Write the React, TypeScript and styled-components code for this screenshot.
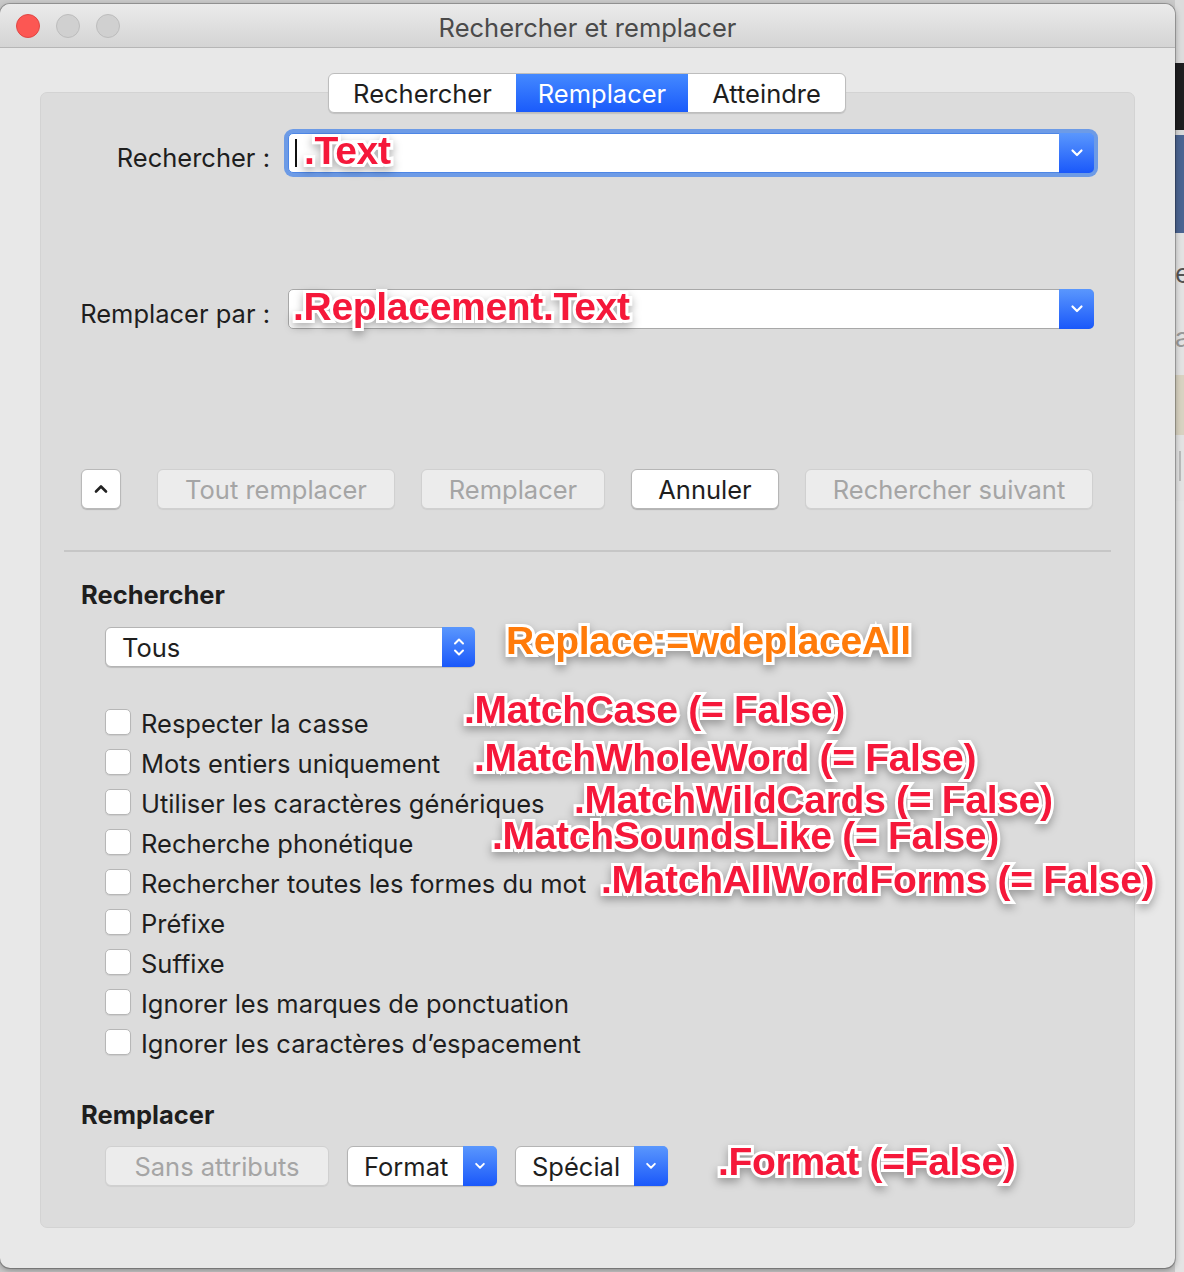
import React from 'react';
import styled, { createGlobalStyle, css } from 'styled-components';

const GlobalStyle = createGlobalStyle`
  html, body {
    margin: 0;
    padding: 0;
    background: #d6d6d6;
  }
  body {
    font-family: Inter, "Noto Sans", "Liberation Sans", sans-serif;
    color: #1e1e1e;
  }
  * { box-sizing: border-box; }
`;

const SEARCH_OPTIONS = [
  'Respecter la casse',
  'Mots entiers uniquement',
  'Utiliser les caractères génériques',
  'Recherche phonétique',
  'Rechercher toutes les formes du mot',
  'Préfixe',
  'Suffixe',
  'Ignorer les marques de ponctuation',
  'Ignorer les caractères d’espacement',
];

// annotation callouts, positions relative to the group box
const NOTES: Array<{ text: string; x: number; y: number; tone?: 'orange' }> = [
  { text: '.Text', x: 263, y: 38 },
  { text: '.Replacement.Text', x: 252, y: 194 },
  { text: 'Replace:=wdeplaceAll', x: 465, y: 528, tone: 'orange' },
  { text: '.MatchCase (= False)', x: 423, y: 597 },
  { text: '.MatchWholeWord (= False)', x: 433, y: 645 },
  { text: '.MatchWildCards (= False)', x: 533, y: 687 },
  { text: '.MatchSoundsLike (= False)', x: 451, y: 723 },
  { text: '.MatchAllWordForms (= False)', x: 560, y: 767 },
  { text: '.Format (=False)', x: 677, y: 1049 },
];

const ChevronDown = ({ size = 14 }: { size?: number }) => (
  <svg width={size} height={size} viewBox="0 0 14 14" fill="none">
    <path d="M2.5 4.5 L7 9 L11.5 4.5" stroke="#fff" strokeWidth="2.2" strokeLinecap="round" strokeLinejoin="round" />
  </svg>
);

const Stepper = () => (
  <svg width="14" height="26" viewBox="0 0 14 26" fill="none">
    <path d="M3 9.5 L7 5.5 L11 9.5" stroke="#fff" strokeWidth="2" strokeLinecap="round" strokeLinejoin="round" />
    <path d="M3 16.5 L7 20.5 L11 16.5" stroke="#fff" strokeWidth="2" strokeLinecap="round" strokeLinejoin="round" />
  </svg>
);

const CaretUp = () => (
  <svg width="16" height="16" viewBox="0 0 16 16" fill="none">
    <path d="M3 10.5 L8 5.5 L13 10.5" stroke="#222" strokeWidth="2.6" strokeLinecap="round" strokeLinejoin="round" />
  </svg>
);

const App: React.FC = () => {
  return (
    <>
      <GlobalStyle />
      <Desktop>
        <WindowColumn>
          <Window>
            <TitleBar>
              <Lights>
                <Light $color="close" />
                <Light />
                <Light />
              </Lights>
              <Title>Rechercher et remplacer</Title>
              <span />
            </TitleBar>

            <Body>
              <Tabs>
                <Tab>Rechercher</Tab>
                <Tab $active>Remplacer</Tab>
                <Tab>Atteindre</Tab>
              </Tabs>

              <GroupBox>
                <FieldGrid>
                  <FieldLabel>Rechercher :</FieldLabel>
                  <Combo $focused>
                    <ComboInput>
                      <Cursor />
                    </ComboInput>
                    <BlueArrow $width={35}>
                      <ChevronDown />
                    </BlueArrow>
                  </Combo>
                  <FieldLabel>Remplacer par :</FieldLabel>
                  <Combo>
                    <ComboInput />
                    <BlueArrow $width={35}>
                      <ChevronDown />
                    </BlueArrow>
                  </Combo>
                </FieldGrid>

                <ActionRow>
                  <SquareButton>
                    <CaretUp />
                  </SquareButton>
                  <PushButton $width={238} $disabled>Tout remplacer</PushButton>
                  <PushButton $width={184} $disabled>Remplacer</PushButton>
                  <PushButton $width={148}>Annuler</PushButton>
                  <PushButton $width={288} $disabled>Rechercher suivant</PushButton>
                </ActionRow>

                <Separator />

                <SectionTitle>Rechercher</SectionTitle>
                <Indented>
                  <PopUp $width={370}>
                    <PopUpText>Tous</PopUpText>
                    <BlueArrow $width={33}>
                      <Stepper />
                    </BlueArrow>
                  </PopUp>
                </Indented>

                <CheckList>
                  {SEARCH_OPTIONS.map((label) => (
                    <CheckRow key={label}>
                      <CheckBox />
                      <CheckLabel>{label}</CheckLabel>
                    </CheckRow>
                  ))}
                </CheckList>

                <SectionTitle $gap={38}>Remplacer</SectionTitle>
                <BottomRow>
                  <PushButton $width={224} $disabled>Sans attributs</PushButton>
                  <PopUp $width={150}>
                    <PopUpText>Format</PopUpText>
                    <BlueArrow $width={34}>
                      <ChevronDown size={12} />
                    </BlueArrow>
                  </PopUp>
                  <PopUp $width={153}>
                    <PopUpText>Spécial</PopUpText>
                    <BlueArrow $width={34}>
                      <ChevronDown size={12} />
                    </BlueArrow>
                  </PopUp>
                </BottomRow>

                {NOTES.map((n) => (
                  <Note key={n.text} $tone={n.tone} style={{ left: n.x, top: n.y }}>
                    {n.text}
                  </Note>
                ))}
              </GroupBox>
            </Body>
          </Window>
        </WindowColumn>

        <BehindApp>
          <Band $h={63} $bg="#dcdcdc" />
          <Band $h={67} $bg="#1e1e20" />
          <Band $h={5} $bg="#d9d9d9" />
          <Band $h={98} $bg="#4b6491" />
          <Band $h={142} $bg="#e2e2e2">
            <BehindText style={{ marginTop: 26 }}>e</BehindText>
            <BehindText style={{ marginTop: 34, color: '#9a9a9a' }}>a</BehindText>
          </Band>
          <Band $h={60} $bg="#d8d2c1" />
          <Band $h={66} $bg="#e2e2e2">
            <BehindRule />
          </Band>
          <Band $h={771} $bg="#e4e4e4" />
        </BehindApp>
      </Desktop>
    </>
  );
};

const Desktop = styled.div`
  display: flex;
  width: 1184px;
  height: 1272px;
  overflow: hidden;
  background: #c9c9c9;
`;

const WindowColumn = styled.div`
  padding-top: 4px;
  width: 1175px;
  flex-shrink: 0;
  position: relative;
  z-index: 2;
`;

const Window = styled.div`
  width: 1175px;
  background: #e8e8e8;
  border-radius: 10px;
  box-shadow: 0 0 0 1px rgba(0, 0, 0, 0.22), 0 2px 6px rgba(0, 0, 0, 0.35);
  overflow: hidden;
`;

const TitleBar = styled.div`
  height: 44px;
  display: grid;
  grid-template-columns: 1fr auto 1fr;
  align-items: center;
  background: linear-gradient(#ebebeb, #d4d4d4);
  border-bottom: 1px solid #b6b6b6;
`;

const Lights = styled.div`
  display: flex;
  gap: 16px;
  padding-left: 16px;
`;

const Light = styled.span<{ $color?: 'close' }>`
  width: 24px;
  height: 24px;
  border-radius: 50%;
  ${({ $color }) =>
    $color === 'close'
      ? css`
          background: #fc5753;
          border: 1px solid #df4744;
        `
      : css`
          background: #d0d0d0;
          border: 1px solid #bcbcbc;
        `}
`;

const Title = styled.div`
  font-size: 25.5px;
  color: #4a4a4a;
  padding-top: 3px;
`;

const Body = styled.div`
  padding-top: 25px;
  display: flex;
  flex-direction: column;
  align-items: center;
`;

const Tabs = styled.div`
  display: flex;
  height: 40px;
  background: #fff;
  border: 1px solid #bdbdbd;
  border-radius: 6px;
  box-shadow: 0 1px 1px rgba(0, 0, 0, 0.12);
  overflow: hidden;
  position: relative;
  z-index: 1;
  margin-left: -1px;
`;

const Tab = styled.div<{ $active?: boolean }>`
  display: flex;
  align-items: center;
  padding: 0 24px;
  font-size: 25.5px;
  color: #1e1e1e;
  ${({ $active }) =>
    $active &&
    css`
      background: linear-gradient(#4489ff, #1a5bfb);
      color: #fff;
      padding: 0 22px;
    `}
`;

const GroupBox = styled.div`
  position: relative;
  align-self: stretch;
  margin: -21px 40px 40px;
  padding: 40px 0 41px;
  background: #dcdcdc;
  border: 1px solid #d3d3d3;
  border-radius: 7px;
`;

const FieldGrid = styled.div`
  display: grid;
  grid-template-columns: 229px 1fr;
  column-gap: 18px;
  row-gap: 116px;
  padding-right: 40px;
`;

const FieldLabel = styled.div`
  font-size: 25.5px;
  text-align: right;
  align-self: center;
  padding-top: 9px;
  white-space: nowrap;
`;

const Combo = styled.div<{ $focused?: boolean }>`
  display: flex;
  height: 40px;
  border-radius: 5px;
  background: #fff;
  border: 1px solid #a8a8a8;
  ${({ $focused }) =>
    $focused &&
    css`
      border-color: #4d86e6;
      box-shadow: 0 0 0 4px #6d9be6;
    `}
`;

const ComboInput = styled.div`
  flex: 1;
  display: flex;
  align-items: center;
  padding-left: 6px;
`;

const Cursor = styled.span`
  width: 2px;
  height: 28px;
  background: #111;
`;

const BlueArrow = styled.div<{ $width: number }>`
  width: ${({ $width }) => $width}px;
  margin: -1px -1px -1px 0;
  display: flex;
  align-items: center;
  justify-content: center;
  background: linear-gradient(#5a97fd, #1a58fa);
  border-radius: 0 5px 5px 0;
`;

const ActionRow = styled.div`
  display: flex;
  gap: 26px;
  margin-top: 140px;
  padding: 0 40px;
  & > *:nth-child(2) {
    margin-left: 10px;
  }
`;

const buttonBase = css`
  height: 40px;
  border-radius: 6px;
  display: flex;
  align-items: center;
  justify-content: center;
  font-size: 25.5px;
`;

const SquareButton = styled.div`
  ${buttonBase};
  width: 40px;
  background: #fff;
  border: 1px solid #b9b9b9;
  box-shadow: 0 1px 1px rgba(0, 0, 0, 0.18);
`;

const PushButton = styled.div<{ $width: number; $disabled?: boolean }>`
  ${buttonBase};
  width: ${({ $width }) => $width}px;
  ${({ $disabled }) =>
    $disabled
      ? css`
          background: #ececec;
          border: 1px solid #d0d0d0;
          color: #a5a5a5;
          box-shadow: 0 1px 1px rgba(0, 0, 0, 0.06);
        `
      : css`
          background: #fff;
          border: 1px solid #b6b6b6;
          color: #1e1e1e;
          box-shadow: 0 1px 1px rgba(0, 0, 0, 0.2);
        `}
`;

const Separator = styled.div`
  height: 2px;
  margin: 41px 23px 0;
  background: #c6c6c6;
`;

const SectionTitle = styled.div<{ $gap?: number }>`
  margin-top: ${({ $gap }) => $gap ?? 28}px;
  padding-left: 40px;
  font-size: 25.5px;
  font-weight: 700;
  line-height: 30px;
  color: #1e1e1e;
`;

const Indented = styled.div`
  margin-top: 17px;
  padding-left: 64px;
  display: flex;
`;

const PopUp = styled.div<{ $width: number }>`
  display: flex;
  width: ${({ $width }) => $width}px;
  height: 40px;
  background: #fff;
  border: 1px solid #b4b4b4;
  border-radius: 6px;
  box-shadow: 0 1px 1px rgba(0, 0, 0, 0.15);
`;

const PopUpText = styled.div`
  flex: 1;
  display: flex;
  align-items: center;
  padding-left: 16px;
  font-size: 25.5px;
`;

const CheckList = styled.div`
  margin-top: 35px;
  padding-left: 64px;
  display: flex;
  flex-direction: column;
`;

const CheckRow = styled.div`
  height: 40px;
  display: flex;
  align-items: center;
  gap: 10px;
`;

const CheckBox = styled.span`
  width: 26px;
  height: 26px;
  background: #fff;
  border: 1px solid #b7b7b7;
  border-radius: 5px;
  box-shadow: 0 1px 1px rgba(0, 0, 0, 0.08);
`;

const CheckLabel = styled.span`
  font-size: 25.5px;
  padding-top: 2px;
`;

const BottomRow = styled.div`
  margin-top: 16px;
  padding-left: 64px;
  display: flex;
  gap: 18px;
`;

const Note = styled.div<{ $tone?: 'orange' }>`
  position: absolute;
  line-height: 40px;
  white-space: nowrap;
  font-family: "Liberation Sans", Arial, sans-serif;
  font-weight: 700;
  font-size: 39px;
  letter-spacing: -0.3px;
  color: ${({ $tone }) => ($tone === 'orange' ? '#ff7b0a' : '#f5183a')};
  -webkit-text-stroke: 6px #fff;
  paint-order: stroke fill;
  filter: drop-shadow(0 4px 4px rgba(0, 0, 0, 0.3));
`;

const BehindApp = styled.div`
  flex: 1;
  display: flex;
  flex-direction: column;
  overflow: hidden;
`;

const Band = styled.div<{ $h: number; $bg: string }>`
  height: ${({ $h }) => $h}px;
  flex-shrink: 0;
  background: ${({ $bg }) => $bg};
  display: flex;
  flex-direction: column;
`;

const BehindText = styled.span`
  font-size: 26px;
  line-height: 30px;
  color: #555;
`;

const BehindRule = styled.span`
  width: 2px;
  height: 30px;
  margin: 16px 0 0 4px;
  background: #bbb;
`;

export default App;
